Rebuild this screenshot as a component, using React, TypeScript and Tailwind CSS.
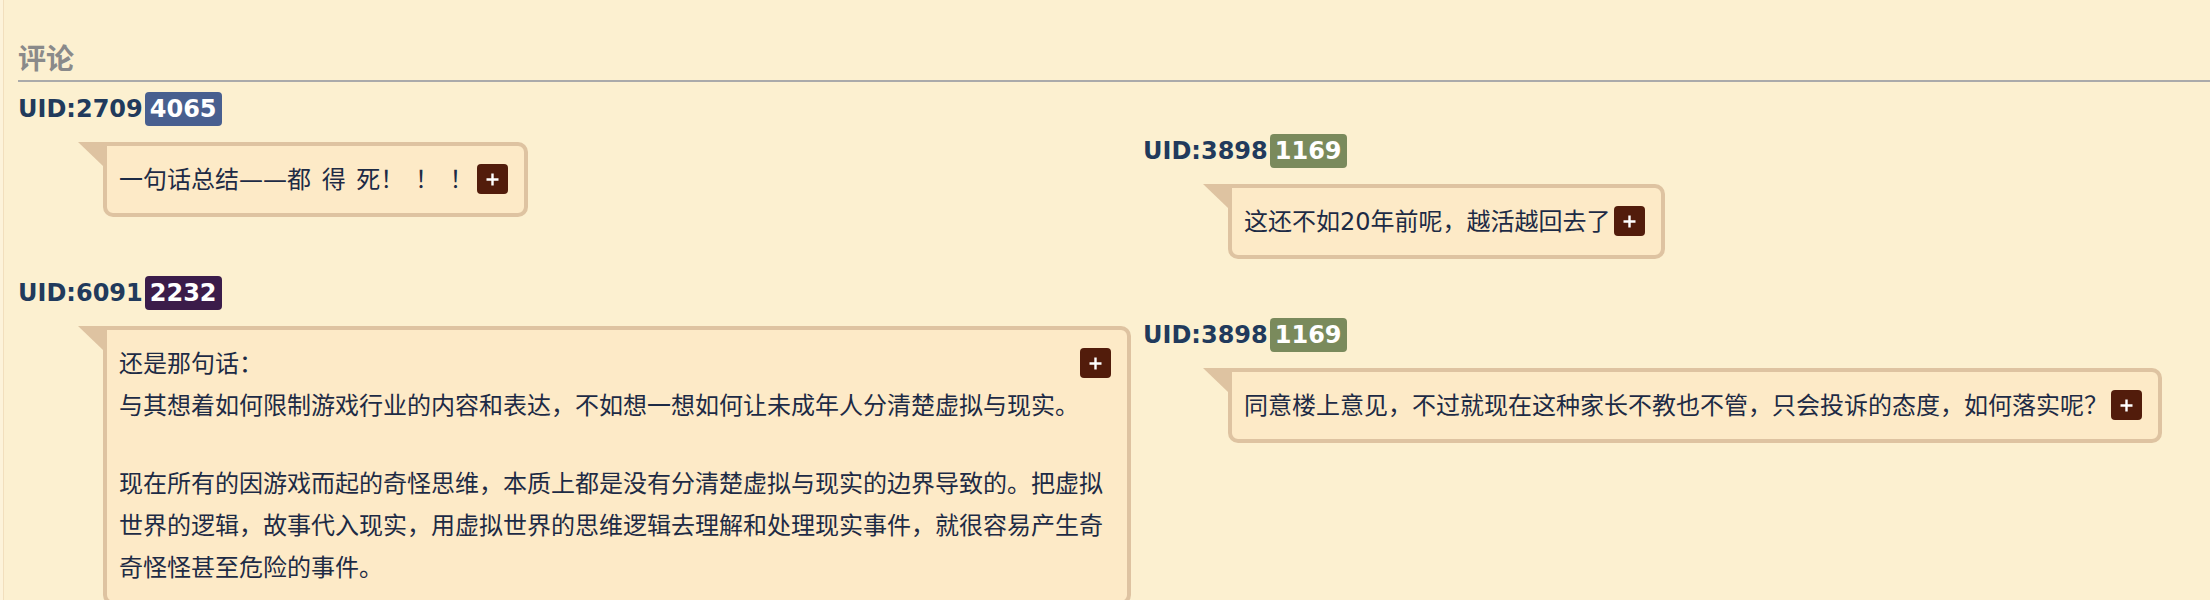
import React from 'react';

type Item = {
  uid: string;
  level: string;
  levelColor: string;
  body: string[][];
};

const leftItems: Item[] = [
  {
    uid: 'UID:2709',
    level: '4065',
    levelColor: 'bg-[#485f8f]',
    body: [['一句话总结——都 得 死！ ！ ！']],
  },
  {
    uid: 'UID:6091',
    level: '2232',
    levelColor: 'bg-[#3b1c4a]',
    body: [
      ['还是那句话：', '与其想着如何限制游戏行业的内容和表达，不如想一想如何让未成年人分清楚虚拟与现实。'],
      ['现在所有的因游戏而起的奇怪思维，本质上都是没有分清楚虚拟与现实的边界导致的。把虚拟世界的逻辑，故事代入现实，用虚拟世界的思维逻辑去理解和处理现实事件，就很容易产生奇奇怪怪甚至危险的事件。'],
    ],
  },
];

const rightItems: Item[] = [
  {
    uid: 'UID:3898',
    level: '1169',
    levelColor: 'bg-[#7a8a5c]',
    body: [['这还不如20年前呢，越活越回去了']],
  },
  {
    uid: 'UID:3898',
    level: '1169',
    levelColor: 'bg-[#7a8a5c]',
    body: [['同意楼上意见，不过就现在这种家长不教也不管，只会投诉的态度，如何落实呢？']],
  },
];

function PlusButton() {
  return (
    <button className="float-right ml-[3px] mt-[5px] flex h-[30px] w-[31px] items-center justify-center rounded-[4px] bg-[#521c0b]">
      <svg width="13" height="13" viewBox="0 0 13 13">
        <path d="M6.5 0.5v12M0.5 6.5h12" stroke="white" strokeWidth="2.4" />
      </svg>
    </button>
  );
}

function Comment({ item }: { item: Item }) {
  return (
    <div>
      <div className="flex h-[34px] items-center">
        <span className="text-[24px] font-bold text-[#213a5c]">{item.uid}</span>
        <span className={`ml-[2px] rounded-[4px] px-[5px] text-[24px] font-bold leading-[34px] text-white ${item.levelColor}`}>
          {item.level}
        </span>
      </div>
      <div className="ml-[85px] mr-[12px] mt-[16px] flex">
        <div className="relative min-w-0 rounded-[10px] rounded-tl-none border-4 border-[#dec3a1] bg-[#fdeac7] pb-[12px] pl-3 pr-4 pt-[13px] text-[24px] leading-[42px] text-[#1d2b45] [word-spacing:3px]">
          <span className="absolute -left-[29px] -top-[4px] h-0 w-0 border-l-[25px] border-t-[24px] border-l-transparent border-t-[#dec3a1]" />
          {item.body.map((para, i) => (
            <div key={i} className={i > 0 ? 'mt-[36px]' : ''}>
              {para.map((line, j) => (
                <div key={j}>
                  {i === 0 && j === 0 && <PlusButton />}
                  {line}
                </div>
              ))}
            </div>
          ))}
        </div>
      </div>
    </div>
  );
}

export default function App() {
  return (
    <div className="flex min-h-screen bg-[#fcf0d0] font-['DejaVu_Sans','Noto_Sans_CJK_SC',sans-serif]">
      <div className="w-[3px] bg-[#fdf3da]" />
      <div className="w-px bg-[#f2dfbd]" />
      <div className="flex-1 pl-[14px]">
        <h3 className="mt-[43px] border-b-2 border-[#aaaaaa] pb-[3px] text-[28px] font-bold leading-[34px] text-[#8a8a8a]">
          评论
        </h3>
        <div className="grid grid-cols-[1125px_1fr]">
          <div className="flex flex-col gap-[59px] pt-[10px]">
            {leftItems.map((item, i) => (
              <Comment key={i} item={item} />
            ))}
          </div>
          <div className="flex flex-col gap-[59px] pr-[18px] pt-[52px]">
            {rightItems.map((item, i) => (
              <Comment key={i} item={item} />
            ))}
          </div>
        </div>
      </div>
    </div>
  );
}
